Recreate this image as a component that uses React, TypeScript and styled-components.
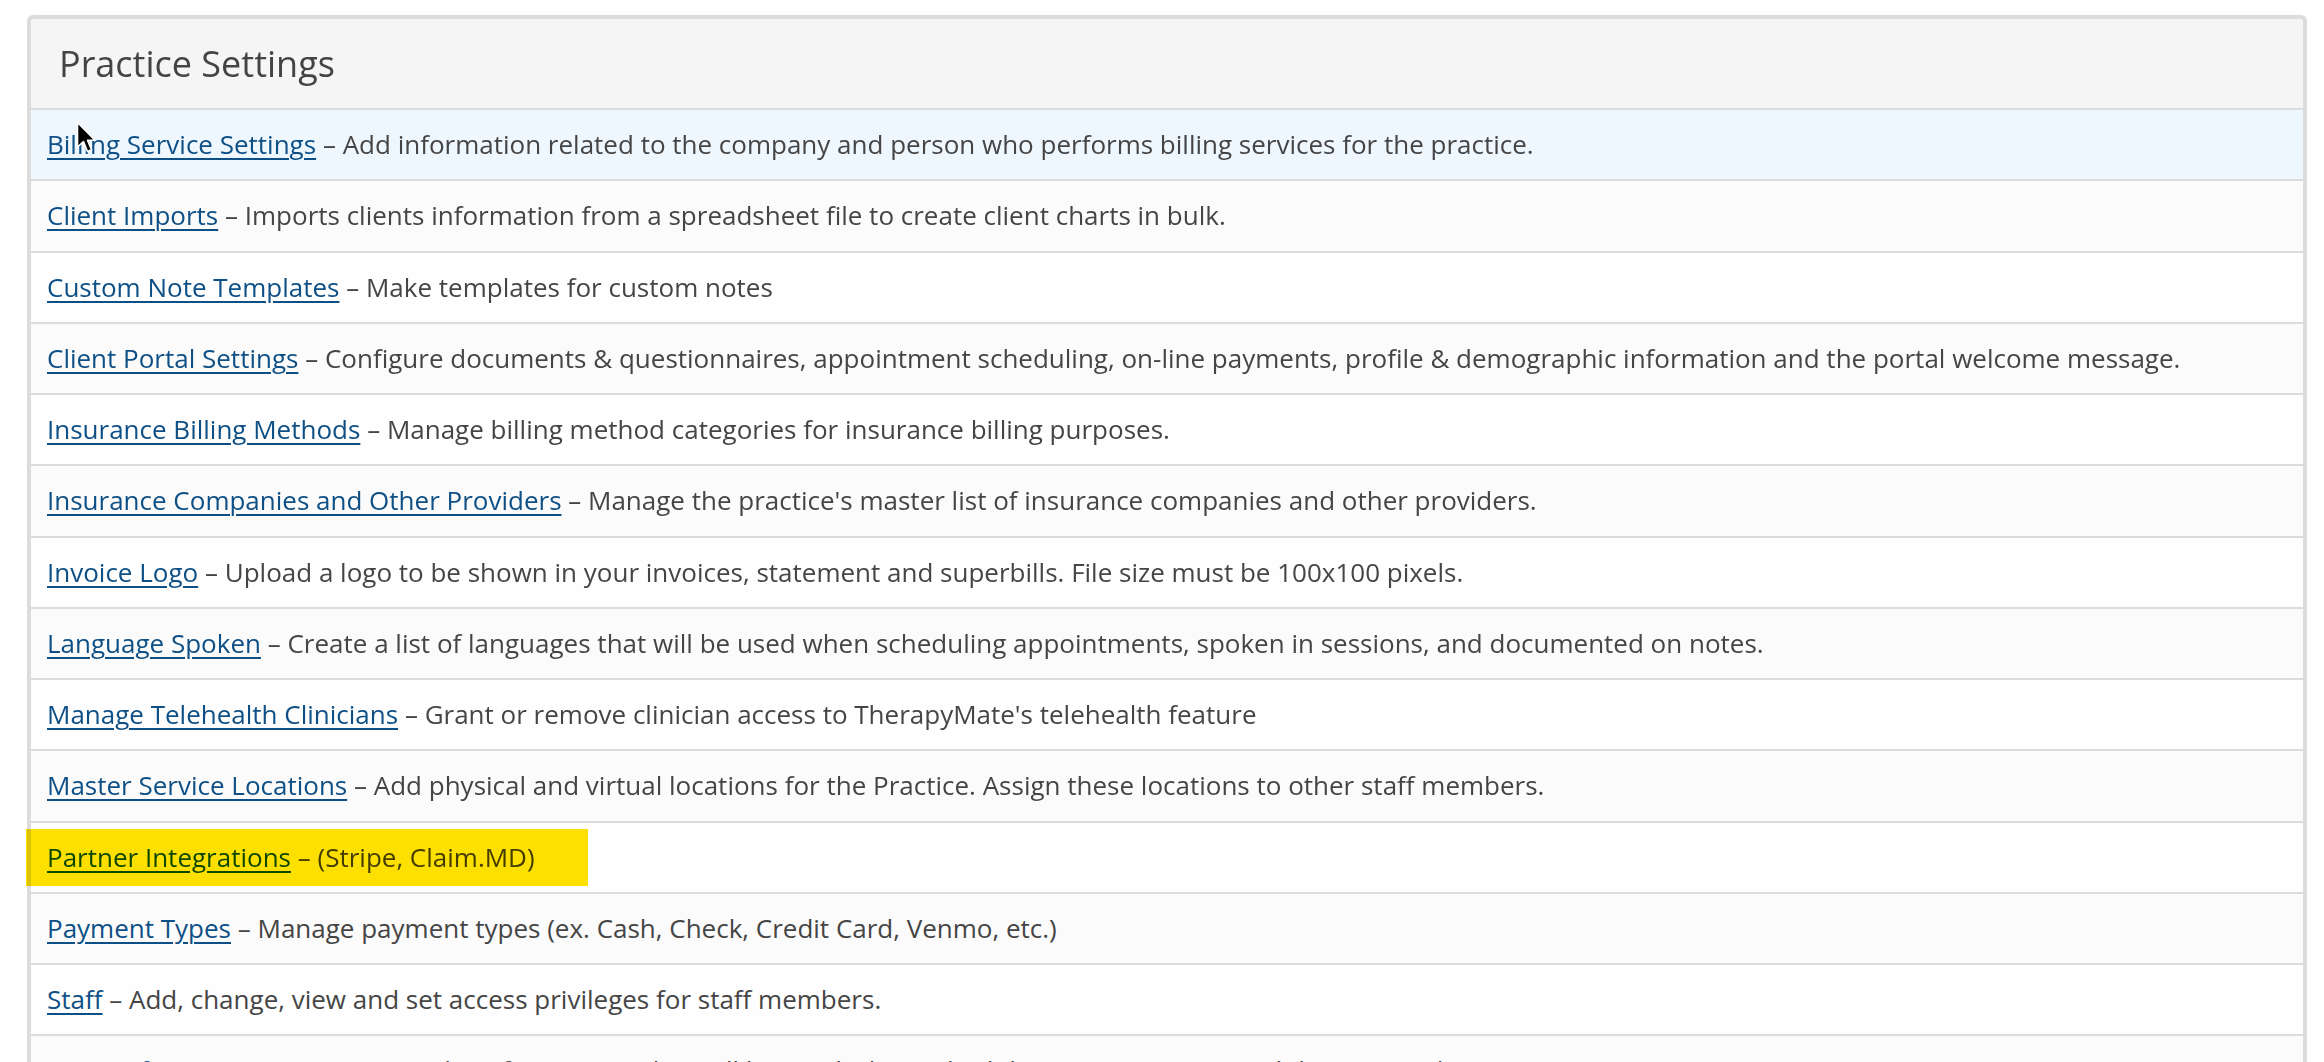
import React from "react";
import styled, { createGlobalStyle } from "styled-components";

const GlobalStyle = createGlobalStyle`
  html, body {
    margin: 0;
    padding: 0;
    background: #ffffff;
    overflow: hidden;
    font-family: "Open Sans", "Noto Sans", sans-serif;
  }
`;

const Page = styled.div`
  padding: 15px 17px 0 27px;
`;

const Panel = styled.div`
  border: 4px solid #dcdcdc;
  border-bottom: none;
  border-radius: 6px 6px 0 0;
  background: #ffffff;
`;

const Heading = styled.div`
  height: 89px;
  display: flex;
  align-items: center;
  padding: 0 28px;
  background: #f5f5f5;
  border-bottom: 2px solid #dcdcdc;
  border-radius: 4px 4px 0 0;
`;

const Title = styled.h3`
  margin: 0;
  font-size: 36px;
  font-weight: 400;
  color: #444444;
`;

const List = styled.div`
  display: flex;
  flex-direction: column;
`;

const Row = styled.div<{ $tone: "hover" | "odd" | "even" }>`
  position: relative;
  padding: 16px 16px;
  line-height: 37.25px;
  font-size: 26px;
  color: #454545;
  white-space: nowrap;
  border-bottom: 2px solid #dcdcdc;
  background: ${(p) =>
    p.$tone === "hover" ? "#eef6fe" : p.$tone === "even" ? "#fbfbfb" : "#fefefe"};
`;

const Link = styled.a`
  color: #0e5086;
  text-decoration: underline;
  text-decoration-thickness: 2px;
  text-underline-offset: 4px;
  cursor: pointer;
`;

const Marker = styled.div`
  position: absolute;
  left: -5px;
  top: 6px;
  width: 562px;
  height: 57px;
  background: #ffe100;
  mix-blend-mode: multiply;
  pointer-events: none;
`;

const Cursor = styled.svg`
  position: absolute;
  left: 45px;
  top: 11px;
  width: 20px;
  height: 34px;
  pointer-events: none;
`;

type Setting = { name: string; desc: string };

const settings: Setting[] = [
  { name: "Billing Service Settings", desc: "Add information related to the company and person who performs billing services for the practice." },
  { name: "Client Imports", desc: "Imports clients information from a spreadsheet file to create client charts in bulk." },
  { name: "Custom Note Templates", desc: "Make templates for custom notes" },
  { name: "Client Portal Settings", desc: "Configure documents & questionnaires, appointment scheduling, on-line payments, profile & demographic information and the portal welcome message." },
  { name: "Insurance Billing Methods", desc: "Manage billing method categories for insurance billing purposes." },
  { name: "Insurance Companies and Other Providers", desc: "Manage the practice's master list of insurance companies and other providers." },
  { name: "Invoice Logo", desc: "Upload a logo to be shown in your invoices, statement and superbills. File size must be 100x100 pixels." },
  { name: "Language Spoken", desc: "Create a list of languages that will be used when scheduling appointments, spoken in sessions, and documented on notes." },
  { name: "Manage Telehealth Clinicians", desc: "Grant or remove clinician access to TherapyMate's telehealth feature" },
  { name: "Master Service Locations", desc: "Add physical and virtual locations for the Practice. Assign these locations to other staff members." },
  { name: "Partner Integrations", desc: "(Stripe, Claim.MD)" },
  { name: "Payment Types", desc: "Manage payment types (ex. Cash, Check, Credit Card, Venmo, etc.)" },
  { name: "Staff", desc: "Add, change, view and set access privileges for staff members." },
  { name: "Types of Visits", desc: "Create a master list of visit types that will be used when scheduling appointments and documented on notes." },
];

const App = () => {
  return (
    <Page>
      <GlobalStyle />
      <Panel>
        <Heading>
          <Title>Practice Settings</Title>
        </Heading>
        <List>
          {settings.map((s, i) => (
            <Row key={s.name} $tone={i === 0 ? "hover" : i % 2 === 1 ? "even" : "odd"}>
              <Link>{s.name}</Link> – {s.desc}
              {s.name === "Partner Integrations" && <Marker />}
              {i === 0 && (
                <Cursor viewBox="0 0 20 34">
                  <path
                    d="M1.5 1.5 L1.5 26 L7.5 20.5 L11.5 30.5 L15.5 28.8 L11.5 19.2 L19 19.2 Z"
                    fill="#000000"
                    stroke="#ffffff"
                    strokeWidth="1.6"
                    strokeLinejoin="round"
                  />
                </Cursor>
              )}
            </Row>
          ))}
        </List>
      </Panel>
    </Page>
  );
};

export default App;
